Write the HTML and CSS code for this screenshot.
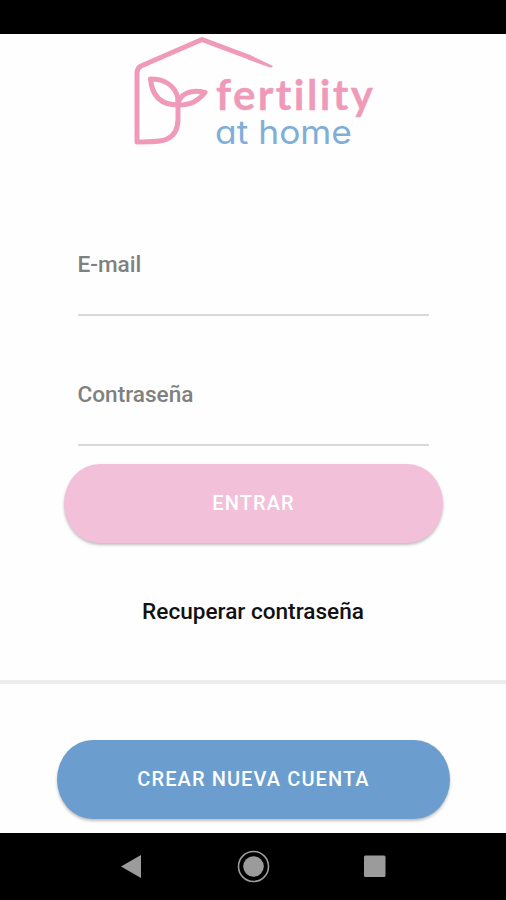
FILE: index.html
```html
<!DOCTYPE html>
<html lang="es">
<head>
<meta charset="utf-8">
<meta name="viewport" content="width=device-width, initial-scale=1">
<title>Fertility at home</title>
<link rel="stylesheet" href="styles.css">
</head>
<body>
<div class="screen">
  <div class="status-bar"></div>
  <main class="content">
    <svg class="logo" viewBox="125 34 256 116" role="img" aria-label="fertility at home">
      <g class="logo-mark">
        <path d="M250 57.5 L202 39.5 L141 66 Q137 68 137 73 V142 C150 142 161 142 167 139 C176 135 178 127 178 119 V97"/>
        <path d="M150.5 79 C165 79 175 86 178 98 V105 C161 105 152 96 150.5 79 Z"/>
        <path d="M178 105 C179 93 192 89 205 92.5 C198 101 191 105 178 105 Z"/>
        <path class="logo-tip" d="M249 54.5 L272 65.5 Q274 67.5 270 67.5 L248 59.5 Z"/>
      </g>
      <text class="logo-top" x="216" y="110" textLength="157">fertility</text>
      <text class="logo-bottom" x="215" y="143.5" textLength="137" lengthAdjust="spacingAndGlyphs">at home</text>
    </svg>
    <form class="login">
      <div class="field"><label>E-mail</label></div>
      <div class="field"><label>Contraseña</label></div>
    </form>
    <button class="button button-login" type="button">ENTRAR</button>
    <a class="recover">Recuperar contraseña</a>
    <hr class="divider">
    <button class="button button-create" type="button">CREAR NUEVA CUENTA</button>
  </main>
  <nav class="nav-bar">
    <svg class="nav-icons" viewBox="0 0 506 67">
      <path d="M121 33.5 L141 22 V45 Z"/>
      <circle cx="253.5" cy="33.5" r="10.3"/>
      <circle class="nav-ring" cx="253.5" cy="33.5" r="15"/>
      <rect x="364" y="22.5" width="21.5" height="21.5" rx="1.5"/>
    </svg>
  </nav>
</div>
</body>
</html>
```

FILE: styles.css
```css
* { box-sizing: border-box; }

body {
  margin: 0;
  background: #fff;
  font-family: Roboto, "Liberation Sans", sans-serif;
}

.screen {
  display: flex;
  flex-direction: column;
  width: 506px;
  height: 900px;
  overflow: hidden;
}

.status-bar { height: 34px; background: #000; }

.content {
  flex: 1;
  display: flex;
  flex-direction: column;
  align-items: center;
  background: #fefefe;
}

.logo { width: 256px; height: 116px; flex: none; }
.logo-mark {
  fill: none;
  stroke: #f09aba;
  stroke-width: 5;
  stroke-linejoin: round;
}
.logo-tip { fill: #f09aba; stroke: none; }
.logo-top {
  font: 700 42px Lato, sans-serif;
  font-variant-ligatures: none;
  fill: #f09aba;
  stroke: #f09aba;
  stroke-width: .3;
}
.logo-bottom {
  font: 400 33px Inter, sans-serif;
  font-feature-settings: "cv11";
  fill: #7faedb;
}

.login {
  width: 351px;
  margin-top: 36px;
}
.field {
  height: 130px;
  padding-top: 65px;
  border-bottom: 2px solid #d9d9d9;
}
.field label {
  display: block;
  font-size: 22.6px;
  line-height: 28px;
  font-weight: 500;
  color: #808080;
}

.button {
  height: 79px;
  flex: none;
  border: 0;
  border-radius: 36px / 40px;
  padding: 0 0 1px;
  color: #fff;
  font: 500 20px Roboto, sans-serif;
  letter-spacing: 1.1px;
  box-shadow: 0 2px 3px rgba(0, 0, 0, .25);
}
.button-login {
  width: 379px;
  margin: 18px 0 0 1px;
  background: #f2c0d9;
}
.button-create {
  width: 393px;
  margin: 56px 0 0 1px;
  background: #6b9ecf;
}

.recover {
  margin-top: 55px;
  font-size: 22.6px;
  line-height: 28px;
  font-weight: 500;
  color: #111;
}
.divider {
  width: 100%;
  height: 4px;
  margin: 54px 0 0;
  border: 0;
  background: #ececec;
}

.nav-bar { height: 67px; background: #000; }
.nav-icons { display: block; width: 506px; height: 67px; fill: #9b9b9b; }
.nav-ring { fill: none; stroke: #9b9b9b; stroke-width: 1.6; }
```
